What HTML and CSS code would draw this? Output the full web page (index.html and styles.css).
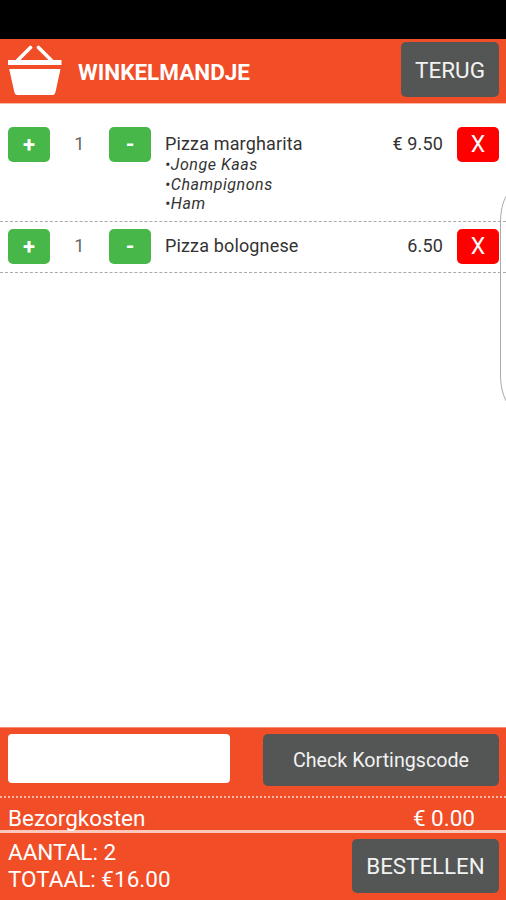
FILE: index.html
```html
<!DOCTYPE html>
<html lang="nl">
<head>
<meta charset="utf-8">
<title>Winkelmandje</title>
<link rel="stylesheet" href="styles.css">
</head>
<body>
<div class="app">
  <div class="statusbar"></div>
  <header class="header">
    <svg class="basket" viewBox="0 0 54 50" width="54" height="50">
      <path d="M9 16 22.500 2.500M44 16 30.500 2.500" fill="none" stroke="#fff" stroke-width="3.600" stroke-linecap="round"/>
      <path d="M0 15h53.500v5H0z" fill="#fff"/>
      <path d="M1.200 24h51.300L47.500 47q-.6 3-3 3h-35q-2.600 0-3.200-3z" fill="#fff"/>
    </svg>
    <h1 class="title">WINKELMANDJE</h1>
    <button class="btn back">TERUG</button>
  </header>
  <main class="cart">
    <div class="row first">
      <button class="qty">+</button>
      <span class="count">1</span>
      <button class="qty">-</button>
      <div class="item">
        <div class="name">Pizza margharita</div>
        <ul class="extras"><li>•Jonge Kaas</li><li>•Champignons</li><li>•Ham</li></ul>
      </div>
      <span class="price">€ 9.50</span>
      <button class="remove">X</button>
    </div>
    <div class="row">
      <button class="qty">+</button>
      <span class="count">1</span>
      <button class="qty">-</button>
      <div class="item"><div class="name">Pizza bolognese</div></div>
      <span class="price">6.50</span>
      <button class="remove">X</button>
    </div>
  </main>
  <footer class="footer">
    <div class="coupon">
      <input class="code" type="text" aria-label="Kortingscode">
      <button class="btn check">Check Kortingscode</button>
    </div>
    <div class="delivery"><span>Bezorgkosten</span><span>€ 0.00</span></div>
    <div class="summary">
      <div class="totals"><div>AANTAL: 2</div><div>TOTAAL: €16.00</div></div>
      <button class="btn order">BESTELLEN</button>
    </div>
  </footer>
  <div class="edge"></div>
</div>
</body>
</html>
```
FILE: styles.css
```css
* { box-sizing: border-box; }
body { margin: 0; font-family: Roboto, "Liberation Sans", sans-serif; background: #fff; }
button { border: 0; padding: 0; margin: 0; font-family: inherit; color: #fff; }
.app { position: relative; width: 506px; height: 900px; overflow: hidden; display: flex; flex-direction: column; }
.statusbar { height: 39px; background: #000; flex: none; }
.header { height: 65px; flex: none; background: #f14d27; display: flex; align-items: flex-start; padding: 3px 7px 0 8px; border-bottom: 1px solid #f9b9a9; }
.basket { margin-top: 3px; flex: none; }
.title { margin: 17px 0 0 16px; font-size: 22.500px; line-height: 27px; font-weight: 700; color: #fff; flex: 1; }
.btn { background: #545655; border-radius: 5px; color: #f2f2f2; }
.back { width: 98px; height: 55px; font-size: 22.500px; padding-top: 1px; }
.cart { flex: 1; padding-top: 15px; }
.row { display: grid; grid-template-columns: 42px 59px 42px 1fr auto 42px; align-items: start; padding: 7px 7px 7px 8px; height: 51px; border-bottom: 1px dashed #aaa; }
.first { height: 103px; padding-top: 8px; }
.qty, .remove { height: 35px; border-radius: 5px; font-size: 22px; line-height: 35px; }
.qty { background: #47b749; font-weight: 700; }
.remove { background: #f00; font-size: 23px; }
.count, .name, .price { font-size: 18px; line-height: 33px; color: #333; letter-spacing: .15px; }
.count { text-align: center; color: #666; }
.item { padding-left: 14px; }
.extras { list-style: none; margin: -5px 0 0; padding: 0; font-size: 16px; line-height: 19.500px; font-style: italic; color: #333; letter-spacing: .55px; }
.price { padding-right: 14px; }
.footer { height: 173px; flex: none; background: #f14d27; color: #fff; font-size: 22.500px; }
.coupon { height: 71px; display: flex; justify-content: space-between; align-items: flex-start; padding: 6px 7px 0 8px; border-top: 1px solid #f58e75; border-bottom: 2px dotted #f9b5a5; }
.code { width: 222px; height: 49px; border: 0; border-radius: 4px; background: #fff; }
.check { width: 236px; height: 52px; font-size: 19.700px; }
.delivery { height: 35px; display: flex; justify-content: space-between; padding: 5px 31px 0 8px; line-height: 30px; border-bottom: 3px solid #fbc8bc; }
.summary { display: flex; justify-content: space-between; padding: 6px 7px 0 8px; }
.totals { line-height: 27px; }
.order { width: 147px; height: 54px; font-size: 22.300px; }
.edge { position: absolute; left: 500px; top: 190px; width: 30px; height: 217px; border: 1px solid #aaa; border-radius: 14px / 32px; }
```
